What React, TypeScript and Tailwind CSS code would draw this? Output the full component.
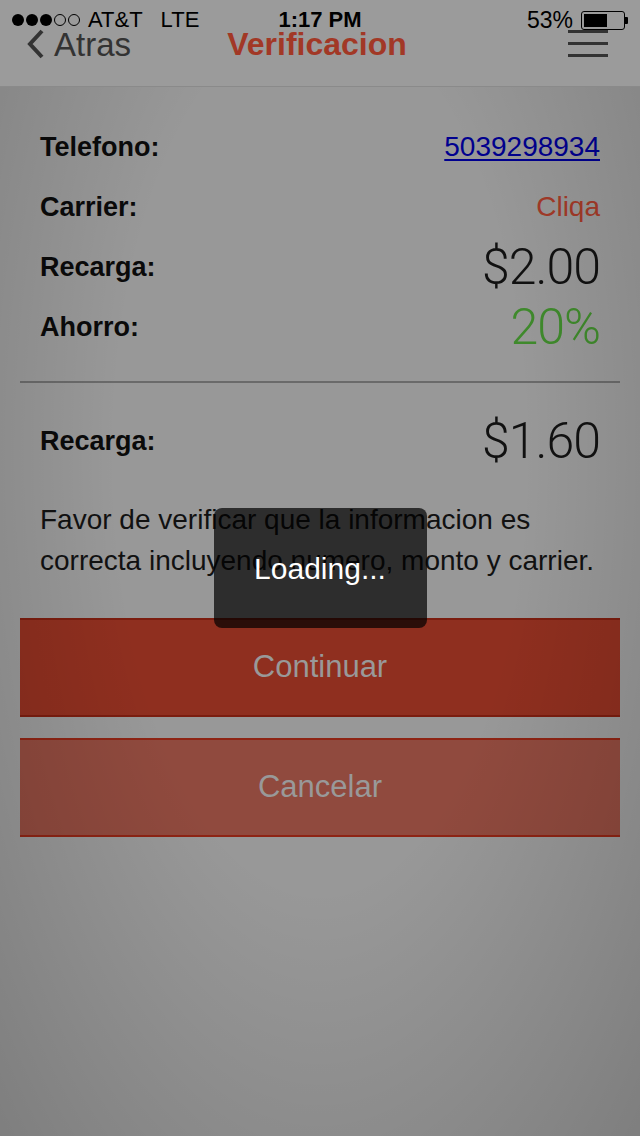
import React from "react";

const sans = "font-['Liberation_Sans','Helvetica_Neue',Arial,sans-serif]";

const Signal = () => (
  <div className="flex items-center gap-[2px]">
    <div className="h-[12px] w-[12px] rounded-full bg-black" />
    <div className="h-[12px] w-[12px] rounded-full bg-black" />
    <div className="h-[12px] w-[12px] rounded-full bg-black" />
    <div className="h-[12px] w-[12px] rounded-full border border-black" />
    <div className="h-[12px] w-[12px] rounded-full border border-black" />
  </div>
);

const StatusBar = () => (
  <div className="flex h-[32px] items-end justify-between px-[12px] text-[22px] leading-[24px] text-black">
    <div className="flex w-[200px] items-center">
      <Signal />
      <span className="ml-[8px]">AT&amp;T</span>
      <span className="ml-[18px]">LTE</span>
    </div>
    <span className="font-bold">1:17 PM</span>
    <div className="flex w-[200px] items-center justify-end">
      <span className="text-[23px]">53%</span>
      <div className="ml-[8px] flex items-center">
        <div className="flex h-[19px] w-[44px] items-center rounded-[3px] border border-black p-[2px]">
          <div className="h-full w-[23px] bg-black" />
        </div>
        <div className="h-[7px] w-[3px] rounded-r-[1px] bg-black" />
      </div>
    </div>
  </div>
);

const NavBar = () => (
  <div className="-mt-[6px] flex h-[36px] items-center justify-between pl-[26px] pr-[32px]">
    <div className="flex w-[150px] items-center text-[#333333]">
      <svg width="20" height="32" viewBox="0 0 20 32" fill="none">
        <path d="M16 3 L4 16 L16 29" stroke="#333333" strokeWidth="4" strokeLinecap="butt" strokeLinejoin="miter" />
      </svg>
      <span className="ml-[8px] text-[33px] leading-none">Atras</span>
    </div>
    <span className="text-[32px] font-bold leading-none text-[#a23826]">Verificacion</span>
    <div className="flex w-[150px] justify-end">
      <div className="-mt-[2px] flex w-[40px] flex-col gap-[9px]">
        <div className="h-[3px] bg-[#333333]" />
        <div className="h-[3px] bg-[#333333]" />
        <div className="h-[3px] bg-[#333333]" />
      </div>
    </div>
  </div>
);

const Row = ({ label, children }: { label: string; children: React.ReactNode }) => (
  <div className="flex h-[60px] items-center justify-between">
    <span className="text-[27px] font-bold text-[#0a0a0a]">{label}</span>
    {children}
  </div>
);

const light = "font-['Roboto',sans-serif] font-light text-[50px] leading-none tracking-[-1px]";

export default function App() {
  return (
    <div className={`relative flex min-h-[1136px] w-[640px] flex-col bg-[#989898] ${sans}`}>
      <header className="h-[87px] border-b border-[#8a8a8a] bg-[#9b9b9b]">
        <StatusBar />
        <NavBar />
      </header>

      <main className="relative flex-1">
        <div className="px-[40px] pt-[30px]">
          <Row label="Telefono:">
            <a className="text-[28px] text-[#00008f] underline underline-offset-[3px]">5039298934</a>
          </Row>
          <Row label="Carrier:">
            <span className="text-[28px] text-[#a33a28]">Cliqa</span>
          </Row>
          <Row label="Recarga:">
            <span className={`${light} text-[#111111]`}>$2.00</span>
          </Row>
          <Row label="Ahorro:">
            <span className={`${light} text-[#3f8a2c]`}>20%</span>
          </Row>
        </div>

        <div className="mx-[20px] mt-[24px] h-[2px] bg-[#6a6a6a]" />

        <div className="px-[40px] pt-[28px]">
          <Row label="Recarga:">
            <span className={`${light} text-[#111111]`}>$1.60</span>
          </Row>
          <p className="mt-[28px] text-[28px] leading-[41px] text-[#111111]">
            Favor de verificar que la informacion es correcta incluyendo numero, monto y carrier.
          </p>
        </div>

        <div className="mx-[20px] mt-[37px] flex flex-col gap-[21px]">
          <button className="flex h-[99px] items-center justify-center border-y-2 border-[#7b1d0f] bg-[#8f2f1f] text-[31px] text-[#999999]">
            Continuar
          </button>
          <button className="flex h-[99px] items-center justify-center border-y-2 border-[#8e2414] bg-[#904a3e] text-[31px] text-[#999999]">
            Cancelar
          </button>
        </div>

        {/* vignette of the loading overlay */}
        <div className="pointer-events-none absolute inset-0 bg-[radial-gradient(ellipse_at_50%_35%,rgba(0,0,0,0)_45%,rgba(0,0,0,0.17)_100%)]" />
      </main>

      {/* loading toast */}
      <div className="pointer-events-none absolute inset-0 flex items-center justify-center">
        <div className="flex h-[120px] w-[213px] items-center justify-center rounded-[8px] bg-black/70">
          <span className="text-[30px] text-white">Loading...</span>
        </div>
      </div>
    </div>
  );
}
